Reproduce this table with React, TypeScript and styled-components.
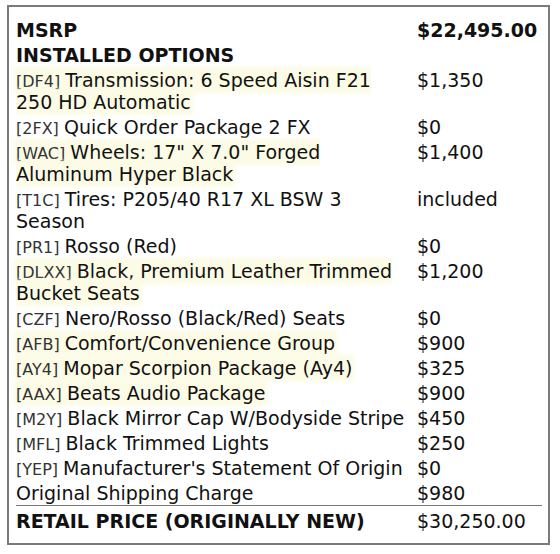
import React from "react";
import styled, { createGlobalStyle } from "styled-components";

const Global = createGlobalStyle`
  html, body { margin: 0; padding: 0; background: #fff; }
  body { font-family: "DejaVu Sans", "Liberation Sans", sans-serif; color: #111; }
`;

const Box = styled.div`
  margin: 5px 0 0 7px;
  width: 543px;
  height: 540px;
  box-sizing: border-box;
  border: 2px solid #7a7a7a;
  padding: 10px 8px 0 7px;
`;

const Table = styled.table`
  border-collapse: collapse;
  width: 526px;
  font-size: 19px;
  line-height: 22px;
`;

const Row = styled.tr<{ $total?: boolean }>`
  ${(p) => (p.$total ? "border-top: 1px solid #777;" : "")}
  & > td {
    padding-top: ${(p) => (p.$total ? "4px" : "1.5px")};
  }
`;

const Desc = styled.td<{ $bold?: boolean }>`
  padding: 1.5px 6px 1.5px 0;
  width: 395px;
  vertical-align: top;
  font-weight: ${(p) => (p.$bold ? 700 : 400)};
`;

const Price = styled.td<{ $bold?: boolean }>`
  padding: 1.5px 0;
  vertical-align: top;
  white-space: nowrap;
  font-weight: ${(p) => (p.$bold ? 700 : 400)};
`;

const Mark = styled.span<{ $hl?: boolean }>`
  background: ${(p) => (p.$hl ? "#fcfbe6" : "transparent")};
  box-shadow: ${(p) => (p.$hl ? "0 0 4px 2px #fcfbe6" : "none")};
`;

const Code = styled.span`
  font-size: 16px;
  line-height: 1;
  color: #333;
`;

type Item = { code?: string; text: string; price: string; hl?: boolean };

const items: Item[] = [
  { code: "DF4", text: "Transmission: 6 Speed Aisin F21 250 HD Automatic", price: "$1,350", hl: true },
  { code: "2FX", text: "Quick Order Package 2 FX", price: "$0" },
  { code: "WAC", text: 'Wheels: 17" X 7.0" Forged Aluminum Hyper Black', price: "$1,400", hl: true },
  { code: "T1C", text: "Tires: P205/40 R17 XL BSW 3 Season", price: "included" },
  { code: "PR1", text: "Rosso (Red)", price: "$0" },
  { code: "DLXX", text: "Black, Premium Leather Trimmed Bucket Seats", price: "$1,200", hl: true },
  { code: "CZF", text: "Nero/Rosso (Black/Red) Seats", price: "$0" },
  { code: "AFB", text: "Comfort/Convenience Group", price: "$900", hl: true },
  { code: "AY4", text: "Mopar Scorpion Package (Ay4)", price: "$325", hl: true },
  { code: "AAX", text: "Beats Audio Package", price: "$900", hl: true },
  { code: "M2Y", text: "Black Mirror Cap W/Bodyside Stripe", price: "$450" },
  { code: "MFL", text: "Black Trimmed Lights", price: "$250" },
  { code: "YEP", text: "Manufacturer's Statement Of Origin", price: "$0" },
  { text: "Original Shipping Charge", price: "$980" },
];

export default function App() {
  return (
    <>
      <Global />
      <Box>
        <Table>
          <tbody>
            <Row>
              <Desc $bold>MSRP</Desc>
              <Price $bold>$22,495.00</Price>
            </Row>
            <Row>
              <Desc $bold>INSTALLED OPTIONS</Desc>
              <Price />
            </Row>
            {items.map((it, i) => (
              <Row key={i}>
                <Desc>
                  <Mark $hl={it.hl}>
                    {it.code && <Code>[{it.code}] </Code>}
                    {it.text}
                  </Mark>
                </Desc>
                <Price>{it.price}</Price>
              </Row>
            ))}
            <Row $total>
              <Desc $bold>RETAIL PRICE (ORIGINALLY NEW)</Desc>
              <Price>$30,250.00</Price>
            </Row>
          </tbody>
        </Table>
      </Box>
    </>
  );
}
